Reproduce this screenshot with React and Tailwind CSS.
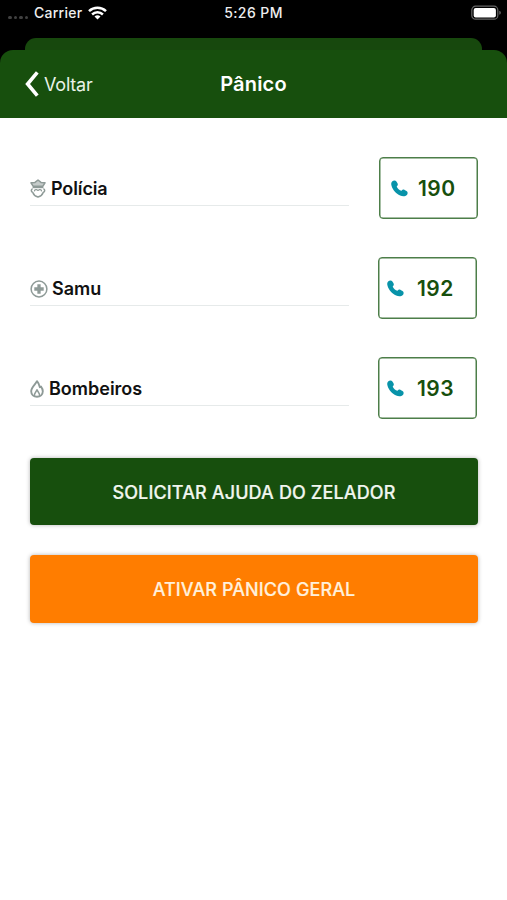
const icons = {
  police: (
    <svg className="block h-[19px] w-[16px]" viewBox="0 0 16 19" fill="none" stroke="#8e9a97" strokeWidth="1.5" strokeLinejoin="round">
      <path d="M1 3.8 5 3.4 8 1l3 2.4 4 .4-2.1 3.4H3.1Z" fill="#8e9a97" fillOpacity=".5" />
      <path d="M2.6 8.4h10.8" strokeWidth="1.6" />
      <path d="M2.6 9.6C.7 10.6 1 12.8 2.8 13.4 3.6 15.8 6 17.4 8 18c2-.6 4.4-2.2 5.2-4.6 1.8-.6 2.1-2.8.2-3.8" />
      <path d="M4.4 12.4c.2-1.6 1.2-2 2-1.9l1.6 1 1.6-1c.8-.1 1.8.3 2 1.9" strokeWidth="1.2" />
    </svg>
  ),
  samu: (
    <svg className="block h-[18px] w-[18px]" viewBox="0 0 18 18" fill="none" stroke="#8e9a97">
      <circle cx="9" cy="9" r="7.9" strokeWidth="1.5" />
      <path d="M9 4.3v9.4M4.3 9h9.4" strokeWidth="3.3" />
    </svg>
  ),
  fire: (
    <svg className="block h-[18px] w-[14px]" viewBox="0 0 14 18" fill="none" stroke="#8e9a97" strokeWidth="1.9" strokeLinejoin="round">
      <path d="M7 1.2C5.6 4.2 1.2 7.4 1.2 11.2c0 3.4 2.6 5.6 5.8 5.6s5.8-2.2 5.8-5.6c0-2-.9-3.4-1.8-4.6L9.8 7.2C9.4 5 8.4 2.8 7 1.2Z" />
      <path d="M4.5 16c-.7-2.8 1.8-3.9 2.5-6.2.8 2.3 3.2 3.4 2.5 6.2" strokeWidth="1.5" />
    </svg>
  ),
};

const contacts = [
  { icon: "police", name: "Polícia", number: "190", gap: "gap-[5px]", tracking: "tracking-[-0.12px]", card: "ml-[30px] w-[99px] pl-[11px] gap-[10px]" },
  { icon: "samu", name: "Samu", number: "192", gap: "gap-[4px]", tracking: "tracking-[0px]", card: "ml-[29px] w-[99px] pl-[8px] gap-[13px]" },
  { icon: "fire", name: "Bombeiros", number: "193", gap: "gap-[5px]", tracking: "tracking-[0px]", card: "ml-[29px] w-[99px] pl-[8px] gap-[13px]" },
];

function Phone() {
  return (
    <svg className="block h-[17px] w-[17px] shrink-0" viewBox="0 0 17 17">
      <path d="M1.1 1.6C2.4.3 4.5.2 5.4 1.5L6.5 3.2c.7 1.3.3 2.4-.8 3.2.8 1.9 2.7 3.7 4.8 4.4.8-1 1.9-1.6 3.1-.9l1.9 1.1c1.4.9 1.5 2.7.4 3.9-1.6 1.6-4.3 1.6-6.8.6C5 13.7 1.7 10 .6 6.1.1 4.3 0 2.8 1.1 1.6Z" fill="#0893a9" />
    </svg>
  );
}

function Contact({ item }) {
  return (
    <div className="flex h-[62px] items-start">
      <div className={`flex h-[49px] w-[319px] items-start border-b border-[#e6eaea] pt-[22px] ${item.gap}`}>
        <span className={item.icon === "police" ? "" : "pt-[1px]"}>{icons[item.icon]}</span>
        <span className={`text-[18px] leading-[19px] font-semibold whitespace-nowrap text-[#111] ${item.tracking}`}>{item.name}</span>
      </div>
      <button className={`flex h-[62px] items-center rounded-[4px] border border-[#4d7e49] shadow-[inset_0_0_0_0.5px_#4d7e49] ${item.card}`}>
        <Phone />
        <span className="pt-[2px] text-[21px] leading-6 font-semibold tracking-[0.45px] text-[#174f0d]">{item.number}</span>
      </button>
    </div>
  );
}

export default function App() {
  return (
    <div className="flex h-[900px] w-[507px] flex-col overflow-hidden bg-black font-['Inter','Liberation_Sans',sans-serif]">
      <div className="grid h-[38px] shrink-0 grid-cols-[1fr_auto_1fr] items-start px-[8px] pt-[4px] text-[14px] leading-[18px] font-medium text-[#eee]">
        <div className="flex items-center">
          <div className="flex w-[26px] gap-[2px] pt-[8px]">
            {[0, 1, 2, 3].map((i) => <i key={i} className="h-[3px] w-[3.5px] rounded-full bg-[#414141]" />)}
          </div>
          <span className="w-[54px] tracking-[0.25px]">Carrier</span>
          <svg className="h-[14px] w-[19px]" viewBox="0 0 19 14" fill="none" stroke="#fff" strokeWidth="2.5">
            <path d="M1 5.2a12.3 12.3 0 0 1 17 0M4.1 8.5a7.8 7.8 0 0 1 10.8 0" />
            <path d="M9.5 13.5 6.5 10.6a4.3 4.3 0 0 1 6 0Z" fill="#fff" stroke="none" />
          </svg>
        </div>
        <span className="tracking-[0.4px]">5:26 PM</span>
        <svg className="mt-[1px] mr-[-3px] h-[16px] w-[31px] justify-self-end" viewBox="0 0 31 16">
          <rect x=".8" y="1.2" width="26" height="13" rx="3.8" fill="none" stroke="#666" strokeWidth="1.2" />
          <rect x="2.7" y="3" width="22.2" height="9.4" rx="2" fill="#fff" />
          <path d="M28.4 5.8c1.8.6 1.8 3.3 0 4Z" fill="#777" />
        </svg>
      </div>
      <div className="mx-[25px] h-[24px] shrink-0 rounded-t-[11px] bg-[#17480d]" />
      <main className="-mt-[12px] flex flex-1 flex-col">
        <header className="grid h-[68px] shrink-0 grid-cols-[1fr_auto_1fr] items-center rounded-t-[13px] bg-[#174f0d] px-[25px] text-white">
          <button className="flex items-center gap-[5px] text-[18px] leading-6 tracking-[-0.2px] text-[#eaf3e8]">
            <svg className="h-[26px] w-[14px]" viewBox="0 0 14 26" fill="none" stroke="#fff" strokeWidth="3.6">
              <path d="M12.3 1.4 2.6 13l9.7 11.6" />
            </svg>
            <span className="pt-[2px]">Voltar</span>
          </button>
          <h1 className="text-[20px] leading-6 font-semibold tracking-[0.2px]">Pânico</h1>
        </header>
        <div className="flex flex-1 flex-col bg-white pt-[39px] pr-[29px] pl-[30px]">
          <div className="flex flex-col gap-[38px]">
            {contacts.map((item) => <Contact key={item.name} item={item} />)}
          </div>
          <button className="mt-[39px] flex h-[67px] w-[448px] items-center justify-center rounded-[4px] bg-[#174f0d] text-[18px] font-medium tracking-[0.13px] text-[#f1f6ef] shadow-[0_0_4px_rgba(0,0,0,0.3)] [-webkit-text-stroke:0.2px_#f1f6ef]"><span className="pt-px">SOLICITAR AJUDA DO ZELADOR</span></button>
          <button className="mt-[30px] flex h-[68px] w-[448px] items-center justify-center rounded-[4px] bg-[#ff7d00] pt-px text-[18px] font-medium tracking-[0.1px] text-[#fff0dc] shadow-[0_0_4px_rgba(0,0,0,0.3)] [-webkit-text-stroke:0.2px_#fff0dc]">ATIVAR PÂNICO GERAL</button>
        </div>
      </main>
    </div>
  );
}
